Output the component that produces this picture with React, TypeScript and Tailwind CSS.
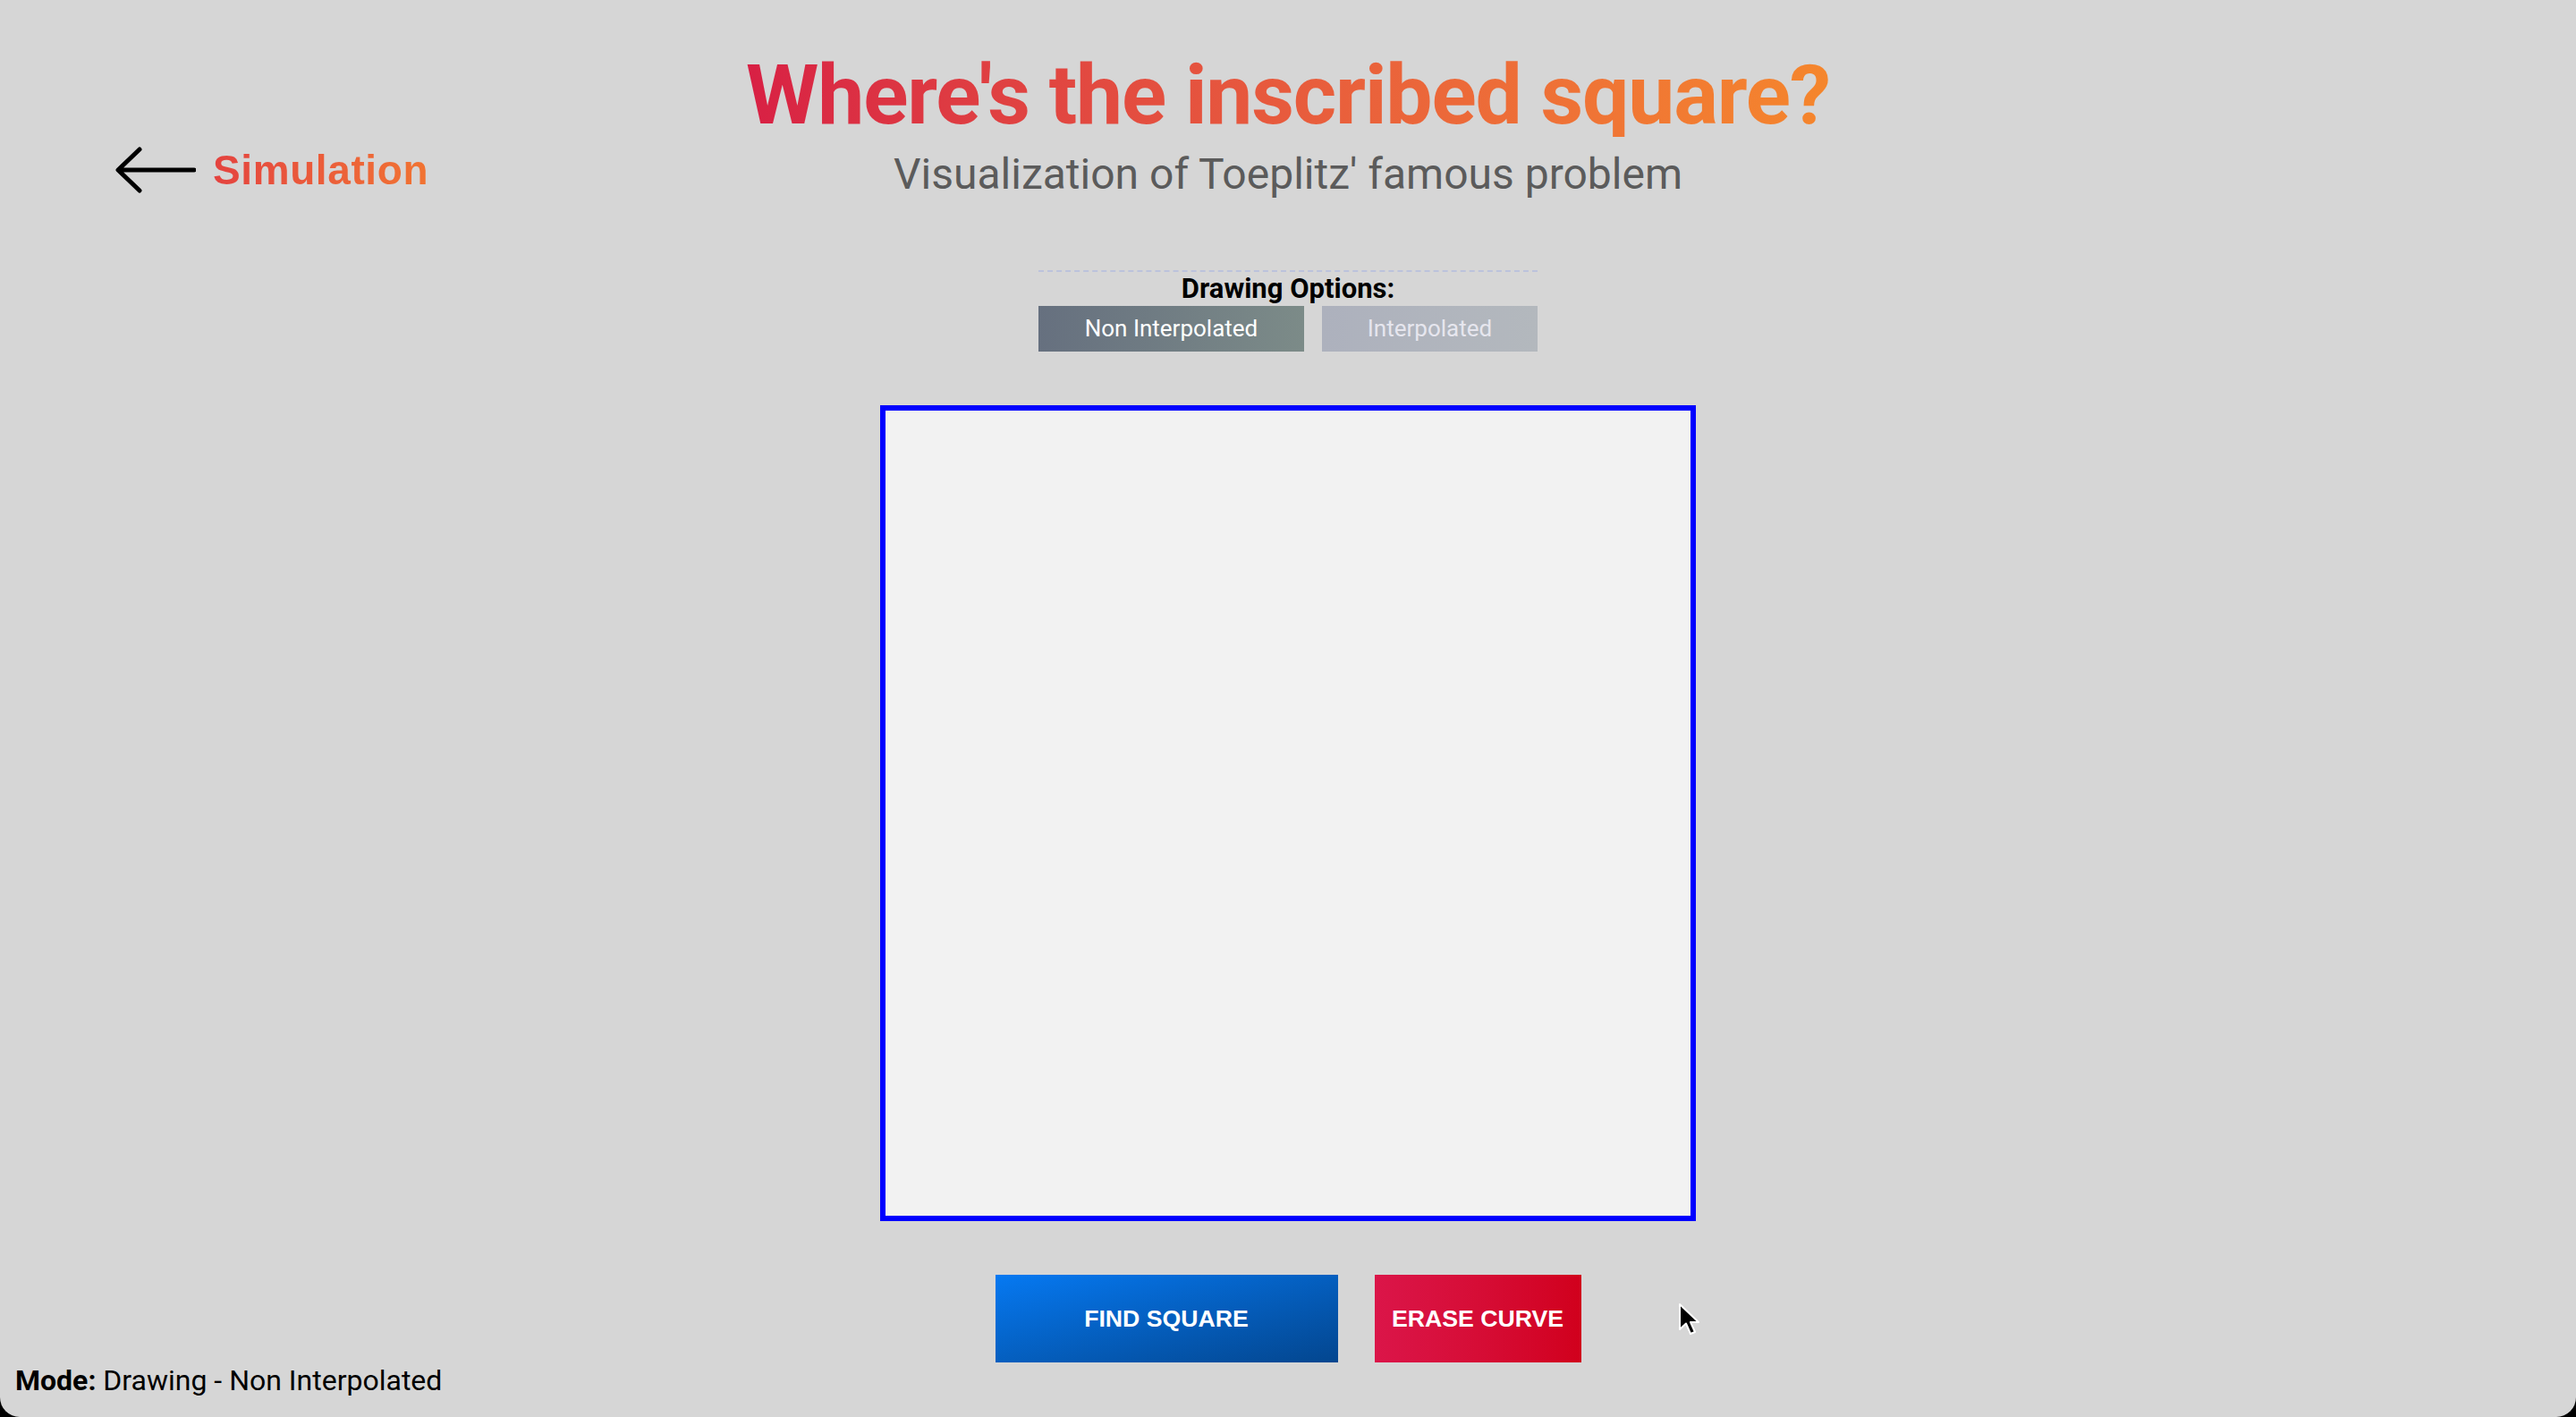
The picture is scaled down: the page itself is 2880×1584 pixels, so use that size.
import { useState } from "react";

function BackArrow() {
    return (
        <svg width="92" height="56" viewBox="0 0 92 56" fill="none">
            <path d="M90 28 H6 M29 5 L5 28 L29 51" stroke="#000" strokeWidth="5" strokeLinecap="round" strokeLinejoin="round" />
        </svg>
    );
}

function Pointer() {
    return (
        <svg width="26" height="38" viewBox="0 0 26 38">
            <path d="M2 2 L2 30 L9 23.5 L14 35 L19 33 L14 22 L23 22 Z" fill="#000" stroke="#fff" strokeWidth="2" strokeLinejoin="round" />
        </svg>
    );
}

export default function App() {
    const [interpolated, setInterpolated] = useState(false);

    return (
        <div className="h-[1584px] w-full bg-black">
            <div className="relative flex h-full flex-col items-center rounded-b-[22px] bg-[#d6d6d6] font-['Roboto',sans-serif]">
                {/* header */}
                <div className="grid w-full grid-cols-[1fr_auto_1fr]">
                    <div className="pl-[127px] pt-[162px]">
                        <a href="#" className="flex items-center gap-[19px]">
                            <BackArrow />
                            <span className="bg-gradient-to-r from-[#e4423f] to-[#f17432] bg-clip-text font-['Liberation_Sans',sans-serif] text-[46px] font-bold leading-none tracking-[0.6px] text-transparent">
                                Simulation
                            </span>
                        </a>
                    </div>
                    <div className="flex flex-col items-center">
                        <h1 className="mt-[60px] bg-gradient-to-r from-[#d81f44] to-[#f5862c] bg-clip-text text-[93px] font-bold leading-none tracking-[-1.2px] text-transparent">
                            Where's the inscribed square?
                        </h1>
                        <p className="mt-[18px] text-[48px] leading-none text-[#5b5b5b]">
                            Visualization of Toeplitz' famous problem
                        </p>
                    </div>
                    <div />
                </div>

                {/* drawing options */}
                <div className="mt-[83px] flex w-[558px] flex-col items-center border-t-2 border-dashed border-[#bcc3dc]">
                    <div className="mt-[3px] text-[31px] font-bold leading-none text-black">Drawing Options:</div>
                    <div className="mt-[4px] flex gap-[20px]">
                        <button
                            onClick={() => setInterpolated(false)}
                            className={`h-[51px] w-[297px] text-[26px] ${!interpolated
                                ? 'bg-gradient-to-r from-[#66707f] to-[#7c8b88] text-white'
                                : 'bg-gradient-to-r from-[#adb1bd] to-[#b3b8bd] text-[#e6e6ee]'
                                }`}
                        >
                            Non Interpolated
                        </button>
                        <button
                            onClick={() => setInterpolated(true)}
                            className={`h-[51px] w-[241px] text-[26px] ${interpolated
                                ? 'bg-gradient-to-r from-[#66707f] to-[#7c8b88] text-white'
                                : 'bg-gradient-to-r from-[#adb1bd] to-[#b3b8bd] text-[#e6e6ee]'
                                }`}
                        >
                            Interpolated
                        </button>
                    </div>
                </div>

                {/* canvas */}
                <div className="mt-[60px] h-[912px] w-[912px] border-[6px] border-[#0000ff] bg-[#f2f2f2]" />

                {/* actions */}
                <div className="mt-[60px] flex gap-[41px] font-['Liberation_Sans',sans-serif] text-[26.67px] font-bold text-white">
                    <button className="h-[98px] w-[383px] bg-gradient-to-br from-[#0679f2] to-[#03468f]">FIND SQUARE</button>
                    <button className="h-[98px] w-[231px] bg-gradient-to-r from-[#db1549] to-[#d1001c]">ERASE CURVE</button>
                </div>

                {/* status */}
                <div className="mt-[4px] self-start pl-[17px] text-[32px] leading-none text-black">
                    <b>Mode:</b> Drawing - {interpolated ? 'Interpolated' : 'Non Interpolated'}
                </div>

                <div className="pointer-events-none absolute left-[1876px] top-[1456px]">
                    <Pointer />
                </div>
            </div>
        </div>
    );
}
